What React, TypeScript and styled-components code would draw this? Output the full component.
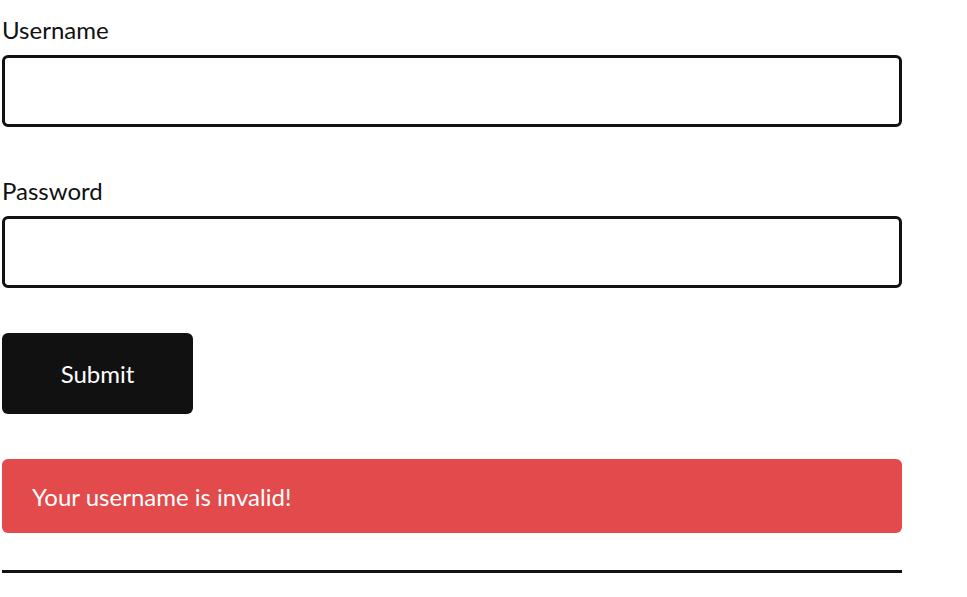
import React from "react";
import styled, { createGlobalStyle } from "styled-components";

const Global = createGlobalStyle`
  html, body { margin: 0; padding: 0; background: #ffffff; }
  body { font-family: Lato, "Noto Sans", sans-serif; color: #111111; }
  * { box-sizing: border-box; }
`;

const Page = styled.form`
  display: flex;
  flex-direction: column;
  width: 902px;
  padding: 16px 0 0 2px;
`;

const Field = styled.div`
  display: flex;
  flex-direction: column;
  margin-bottom: 50px;
`;

const Label = styled.label`
  display: block;
  font-size: 24px;
  line-height: 28px;
  margin-bottom: 11px;
  color: #111111;
`;

const Input = styled.input`
  width: 900px;
  height: 72px;
  border: 3px solid #111111;
  border-radius: 6px;
  padding: 0 16px;
  font-family: inherit;
  font-size: 24px;
  background: #ffffff;
  outline: none;
`;

const Button = styled.button`
  width: 191px;
  height: 81px;
  margin-top: -5px;
  border: none;
  border-radius: 6px;
  background: #111111;
  color: #ffffff;
  font-family: inherit;
  font-size: 24px;
  cursor: pointer;
`;

const ErrorBox = styled.div`
  width: 900px;
  height: 74px;
  margin-top: 45px;
  display: flex;
  align-items: center;
  padding: 0 30px;
  background: #e24a4b;
  color: #ffffff;
  border-radius: 6px;
  font-size: 24px;
`;

const Rule = styled.hr`
  width: 900px;
  margin: 37px 0 0 0;
  border: none;
  border-top: 3px solid #111111;
`;

export default function App() {
  return (
    <>
      <Global />
      <Page onSubmit={(e) => e.preventDefault()}>
        <Field>
          <Label htmlFor="username">Username</Label>
          <Input id="username" type="text" />
        </Field>
        <Field>
          <Label htmlFor="password">Password</Label>
          <Input id="password" type="password" />
        </Field>
        <Button type="submit">Submit</Button>
        <ErrorBox>Your username is invalid!</ErrorBox>
        <Rule />
      </Page>
    </>
  );
}
